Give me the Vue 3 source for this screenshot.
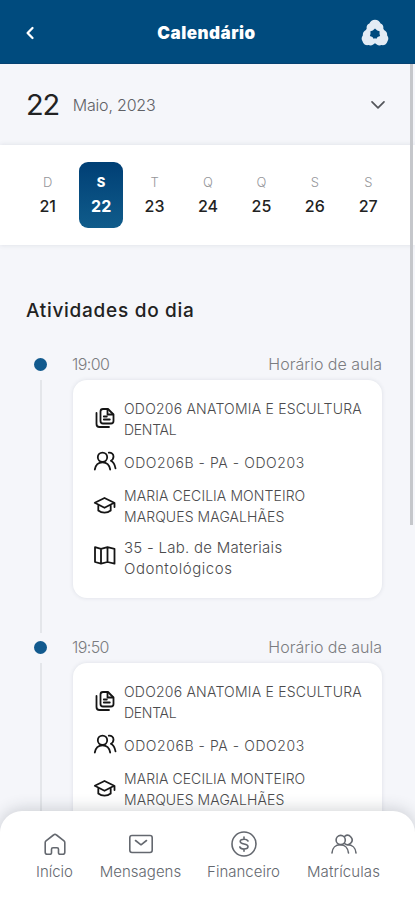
<script setup>
const days = [
  { letter: 'D', number: 21 },
  { letter: 'S', number: 22, active: true },
  { letter: 'T', number: 23 },
  { letter: 'Q', number: 24 },
  { letter: 'Q', number: 25 },
  { letter: 'S', number: 26 },
  { letter: 'S', number: 27 },
]

const rows = [
  { icon: 'docs', lines: [{ text: 'ODO206 ANATOMIA E ESCULTURA', cls: 'l1' }, { text: 'DENTAL', cls: 'l2' }] },
  { icon: 'users', lines: [{ text: 'ODO206B - PA - ODO203', cls: 'l3' }] },
  { icon: 'cap', lines: [{ text: 'MARIA CECILIA MONTEIRO', cls: 'l4' }, { text: 'MARQUES MAGALHÃES', cls: 'l5' }] },
  { icon: 'map', lines: [{ text: '35 - Lab. de Materiais', cls: 'l6' }, { text: 'Odontológicos', cls: 'l7' }] },
]

const activities = [
  { time: '19:00', rows },
  { time: '19:50', rows: rows.slice(0, 3) },
]

const tabs = [
  { label: 'Início', icon: 'home', cls: 't1' },
  { label: 'Mensagens', icon: 'mail', cls: 't2' },
  { label: 'Financeiro', icon: 'money', cls: 't3' },
  { label: 'Matrículas', icon: 'people', cls: 't4' },
]
</script>

<template>
  <div class="screen">
    <header class="topbar">
      <svg class="back" width="12" height="16" viewBox="0 0 12 16"><path d="M8.500 3 3.600 8l4.900 5" /></svg>
      <h1>Calendário</h1>
      <svg class="logo" width="28" height="28" viewBox="0 0 28 28">
        <path fill-rule="evenodd" d="M14 .8c2.700 0 4.600 1.500 5.600 3.600 2.200.8 3.200 2.900 2.700 5 .3 1.300 1.200 1.700 2.200 2.600 2 1.700 1.500 3.300 1.700 4.500 1.500 1.900 1.400 3.900.4 5.500-.8 3.200-3.200 4.500-6 4.100-1.700.8-3.500.6-4.800-.6l-1.800-1.200-1.800 1.200c-1.300 1.200-3.100 1.400-4.800.6-2.800.4-5.200-.9-6-4.100-1-1.600-1.100-3.600.4-5.500.2-1.200-.3-2.800 1.700-4.500 1-.9 1.900-1.300 2.200-2.600-.5-2.100.5-4.200 2.700-5C9.400 2.300 11.300.8 14 .8ZM14 9.400l-2.200 2-2.400.9.100 2.500-.6 2.300 2.500.9 1.500 1.900 1.100-.9 1.100.9 1.500-1.900 2.500-.9-.6-2.300.1-2.500-2.400-.9Z" />
      </svg>
    </header>

    <section class="month">
      <strong>22</strong>
      <span class="month-name">Maio, 2023</span>
      <svg width="16" height="10" viewBox="0 0 16 10"><path d="m2 1.800 6 6 6-6" /></svg>
    </section>

    <section class="week">
      <div v-for="day in days" :key="day.number" class="day" :class="{ active: day.active }">
        <span class="letter">{{ day.letter }}</span>
        <span class="number">{{ day.number }}</span>
      </div>
    </section>

    <main class="agenda">
      <h2>Atividades do dia</h2>
      <article v-for="item in activities" :key="item.time" class="activity">
        <div class="rail"><i class="dot"></i><i class="line"></i></div>
        <div class="body">
          <div class="head"><span class="time">{{ item.time }}</span><span class="kind">Horário de aula</span></div>
          <div class="card">
            <div v-for="row in item.rows" :key="row.icon" class="row">
              <svg class="icon" width="24" height="24" viewBox="0 0 24 24">
                <g v-if="row.icon === 'docs'">
                  <path d="M10 3h5l5.500 5.500V15a2.500 2.500 0 0 1-2.500 2.500h-8A2.500 2.500 0 0 1 7.500 15V5.500A2.500 2.500 0 0 1 10 3Z" />
                  <path d="M14.500 3.300v5.200h5.500M10.800 10.500h3M10.800 13.500h6M3.500 7v11a3 3 0 0 0 3 3h9.500" />
                </g>
                <g v-else-if="row.icon === 'users'">
                  <circle cx="9.500" cy="8.300" r="4.700" />
                  <path d="M1.800 20.500c.8-4.800 3.500-7.200 7.700-7.200s6.900 2.400 7.700 7.200M15.800 3.600c2.900-.2 4.700 1.500 4.700 4 0 2.100-1 3.400-2.600 4.200 2.400 1.300 3.900 3.700 4.600 7.500" />
                </g>
                <g v-else-if="row.icon === 'cap'">
                  <path d="m1.800 9.800 9.700-4.800 9.700 4.800-9.700 5ZM5.300 12v5.500c3.500 2.900 8.900 2.900 12.400 0V12M21.500 10v4" />
                </g>
                <g v-else>
                  <path d="m2 2.200 6 1.700 6.500-1.700 7 1.700v14.800l-7-1.700L8 18.700 2 17ZM8 3.900v14.800M14.500 2.200V17" />
                </g>
              </svg>
              <p><span v-for="line in row.lines" :key="line.text" :class="line.cls">{{ line.text }}</span></p>
            </div>
          </div>
        </div>
      </article>
    </main>

    <i class="scrollbar"></i>

    <nav class="tabbar">
      <div v-for="tab in tabs" :key="tab.label" class="tab">
        <svg width="28" height="28" viewBox="0 0 28 28">
          <path v-if="tab.icon === 'home'" d="M5 10.900 12.500 5a2.300 2.300 0 0 1 3 0l7.500 5.900a2.100 2.100 0 0 1 .8 1.600v9.800a2 2 0 0 1-2 2h-2.800a1.500 1.500 0 0 1-1.500-1.500v-3.500a1.500 1.500 0 0 0-1.500-1.500h-4a1.500 1.500 0 0 0-1.500 1.500v3.500a1.500 1.500 0 0 1-1.500 1.500H6.200a2 2 0 0 1-2-2v-9.800a2.100 2.100 0 0 1 .8-1.600Z" />
          <path v-else-if="tab.icon === 'mail'" d="M5 5.500h18a2.200 2.200 0 0 1 2.200 2.200v12.600a2.200 2.200 0 0 1-2.200 2.200H5a2.200 2.200 0 0 1-2.200-2.200V7.700A2.200 2.200 0 0 1 5 5.500ZM8.500 10.500l5.500 4.300 5.500-4.300" />
          <g v-else-if="tab.icon === 'money'">
            <circle cx="14" cy="14" r="12" />
            <path d="M18 11c-.7-1.300-2.100-1.800-4-1.800-2.200 0-3.800.8-3.800 2.300 0 3.400 7.800 1.600 7.800 5 0 1.600-1.700 2.500-4 2.500s-3.700-.8-4.200-2.100M14 7v2.200M14 19v2.200" />
          </g>
          <g v-else>
            <circle cx="10.700" cy="10" r="4.600" />
            <path d="M2 23c.3-5 3.700-8.200 8.200-8.200s7.800 3.200 8.300 8.200M14.700 6.300a4.600 4.600 0 1 1 0 7.400M17.500 14.800c4.700 0 8.200 3.200 8.500 8.200" />
          </g>
        </svg>
        <span class="label" :class="tab.cls">{{ tab.label }}</span>
      </div>
    </nav>
  </div>
</template>

<style>
body {
  background: #f5f6fa;
}
</style>

<style scoped>
.screen {
  position: relative;
  display: flex;
  flex-direction: column;
  width: 415px;
  height: 900px;
  overflow: hidden;
  background: #f5f6fa;
  font-family: Inter, "Noto Sans", sans-serif;
  color: #222;
}
svg {
  display: block;
  flex: none;
  fill: none;
  stroke: currentColor;
  stroke-linecap: round;
  stroke-linejoin: round;
}
.topbar {
  display: flex;
  flex: none;
  align-items: center;
  justify-content: space-between;
  box-sizing: border-box;
  height: 64px;
  padding: 2px 26px 0 24px;
  border-bottom: 1px solid #064272;
  background: #004b7e;
  color: #fff;
}
.back {
  stroke-width: 2.3;
}
.topbar h1 {
  margin: 0 0 0 16px;
  font-size: 17px;
  font-weight: 900;
  line-height: 24px;
  letter-spacing: 0.5px;
}
.logo {
  fill: #e3ecf5;
  stroke: none;
}
.month {
  display: flex;
  flex: none;
  align-items: center;
  box-sizing: border-box;
  height: 81px;
  padding: 0 29px 0 26px;
}
.month strong {
  font-size: 29px;
  font-weight: 400;
  letter-spacing: -1.3px;
}
.month-name {
  flex: 1;
  margin-left: 14px;
  color: #606166;
  font-size: 16px;
  font-weight: 300;
  letter-spacing: -0.2px;
}
.month svg {
  color: #54565b;
  stroke-width: 1.7;
}
.week {
  display: flex;
  flex: none;
  box-sizing: border-box;
  height: 100px;
  padding: 17px 20px 0 21px;
  background: #fff;
  box-shadow: 0 0 5px rgba(40, 60, 80, 0.12);
}
.day {
  display: flex;
  flex: 1;
  flex-direction: column;
  align-items: center;
  box-sizing: border-box;
  height: 66px;
  margin: 0 4.400px;
  padding-top: 8px;
  border-radius: 9px;
}
.letter {
  color: #95969a;
  font-size: 13px;
  font-weight: 300;
  line-height: 24px;
}
.number {
  font-size: 16px;
  font-weight: 500;
  line-height: 24px;
}
.active {
  background: linear-gradient(#003f75, #105c8b);
  color: #fff;
}
.active .letter {
  color: #fff;
  font-weight: 800;
}
.active .number {
  font-weight: 700;
}
.agenda {
  flex: none;
  padding: 52px 33px 0 26px;
}
.agenda h2 {
  margin: 0 0 33px;
  font-size: 19px;
  font-weight: 500;
  line-height: 28px;
  letter-spacing: 0.72px;
}
.activity {
  display: flex;
  height: 283px;
}
.rail {
  display: flex;
  flex: none;
  flex-direction: column;
  align-items: center;
  width: 29px;
}
.dot {
  width: 13px;
  height: 13px;
  border-radius: 50%;
  background: #125a8e;
}
.line {
  width: 2px;
  height: 253px;
  margin-top: 9px;
  background: #e4e6ea;
}
.dot,
.line {
  flex: none;
}
.body {
  flex: 1;
  margin-left: 18px;
}
.head {
  display: flex;
  justify-content: space-between;
  height: 22px;
  margin-top: -4px;
  margin-left: -1px;
  color: #7b7c80;
  font-size: 16px;
  font-weight: 300;
  line-height: 21px;
}
.time {
  letter-spacing: -0.6px;
}
.card {
  display: flex;
  flex-direction: column;
  gap: 10px;
  box-sizing: border-box;
  height: 218px;
  margin-top: 4px;
  padding: 18px 0 0 20px;
  border-radius: 14px;
  background: #fff;
  box-shadow: 0 0 4px rgba(40, 60, 80, 0.12);
}
.row {
  display: flex;
  flex: none;
  align-items: center;
  min-height: 25px;
}
.icon {
  margin-top: -3px;
  color: #151515;
  stroke-width: 1.8;
}
.row p {
  margin: 0 0 0 7px;
  color: #4b4b4d;
  font-size: 14px;
  font-weight: 300;
  line-height: 21px;
  white-space: nowrap;
}
.row p span {
  display: block;
}
.row p .l1 {
  letter-spacing: 0.22px;
}
.row p .l2 {
  letter-spacing: -0.3px;
}
.row p .l3 {
  letter-spacing: 0.57px;
}
.row p .l4,
.row p .l5 {
  letter-spacing: 0.08px;
}
.row p .l6 {
  font-size: 15px;
  letter-spacing: 0.26px;
}
.row p .l7 {
  font-size: 15px;
  letter-spacing: 0.55px;
}
.scrollbar {
  position: absolute;
  top: 64px;
  right: 2px;
  width: 3px;
  height: 461px;
  background: #c5c7cb;
}
.tabbar {
  position: absolute;
  right: 0;
  bottom: 0;
  left: 0;
  display: grid;
  grid-template-columns: 71px 101px 105px 95px;
  box-sizing: border-box;
  height: 89px;
  padding: 19px 27px 0 19px;
  border-radius: 22px 22px 0 0;
  background: #fff;
  box-shadow: 0 -2px 16px rgba(40, 50, 60, 0.2);
}
.tab {
  display: flex;
  flex-direction: column;
  align-items: center;
  color: #64686f;
}
.tab svg {
  stroke-width: 1.6;
}
.label {
  margin-top: 3px;
  font-size: 15px;
  font-weight: 300;
  line-height: 21px;
}
.t4 {
  letter-spacing: 0.1px;
}
</style>
